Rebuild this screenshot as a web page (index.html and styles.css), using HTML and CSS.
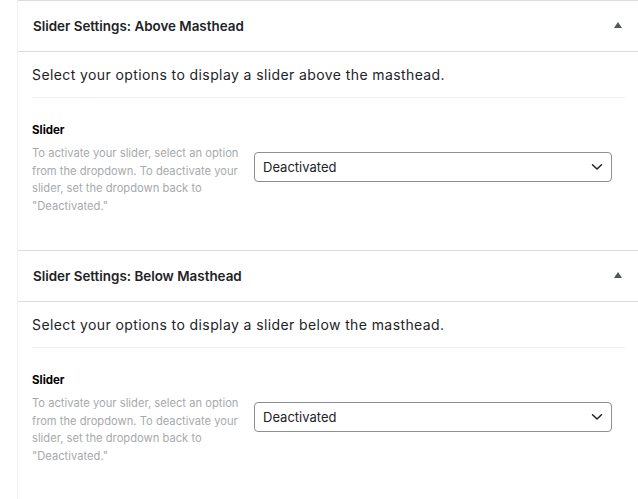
FILE: index.html
```html
<!DOCTYPE html>
<html lang="en">
<head>
<meta charset="utf-8">
<title>Slider Settings</title>
<link rel="stylesheet" href="styles.css">
</head>
<body>
<div class="panel">
  <section class="box">
    <header class="box-head">
      <h3 class="box-title">Slider Settings: Above Masthead</h3>
      <span class="toggle" aria-hidden="true"></span>
    </header>
    <div class="box-body">
      <p class="intro">Select your options to display a slider above the masthead.</p>
      <div class="field">
        <div class="field-info">
          <div class="field-label">Slider</div>
          <p class="field-help">To activate your slider, select an option from the dropdown. To deactivate your slider, set the dropdown back to "Deactivated."</p>
        </div>
        <div class="field-control">
          <div class="select">
            <span class="select-value">Deactivated</span>
            <svg class="chevron" width="12" height="8" viewBox="0 0 12 8"><path d="M1.5 1.8 L6 6 L10.5 1.8" fill="none" stroke="#1d2327" stroke-width="1.5" stroke-linecap="round" stroke-linejoin="round"/></svg>
          </div>
        </div>
      </div>
    </div>
  </section>
  <section class="box">
    <header class="box-head">
      <h3 class="box-title">Slider Settings: Below Masthead</h3>
      <span class="toggle" aria-hidden="true"></span>
    </header>
    <div class="box-body">
      <p class="intro">Select your options to display a slider below the masthead.</p>
      <div class="field">
        <div class="field-info">
          <div class="field-label">Slider</div>
          <p class="field-help">To activate your slider, select an option from the dropdown. To deactivate your slider, set the dropdown back to "Deactivated."</p>
        </div>
        <div class="field-control">
          <div class="select">
            <span class="select-value">Deactivated</span>
            <svg class="chevron" width="12" height="8" viewBox="0 0 12 8"><path d="M1.5 1.8 L6 6 L10.5 1.8" fill="none" stroke="#1d2327" stroke-width="1.5" stroke-linecap="round" stroke-linejoin="round"/></svg>
          </div>
        </div>
      </div>
    </div>
  </section>
</div>
</body>
</html>
```

FILE: styles.css
```css
html, body {
  margin: 0;
  padding: 0;
  background: #ffffff;
}
body {
  font-family: Inter, "Noto Sans", "Liberation Sans", sans-serif;
  color: #1d2327;
}
.panel {
  margin-left: 17px;
  border-left: 1px solid #f0f0f1;
  background: #ffffff;
}
.box {
  border-top: 1px solid #dcdcde;
  height: 249px;
}
.box-head {
  height: 51px;
  box-sizing: border-box;
  border-bottom: 1px solid #dcdcde;
  display: flex;
  align-items: center;
  justify-content: space-between;
  padding: 0 16px 0 15px;
}
.box-title {
  margin: 0;
  font-size: 13.4px;
  font-weight: 600;
  letter-spacing: 0;
  color: #1d2327;
}
.toggle {
  width: 0;
  height: 0;
  border-left: 4.5px solid transparent;
  border-right: 4.5px solid transparent;
  border-bottom: 6px solid #50575e;
  margin-top: -3px;
}
.box-body {
  padding: 0 13px 0 14px;
}
.intro {
  margin: 0;
  padding: 12px 0 11px;
  line-height: 22px;
  font-size: 14px;
  letter-spacing: 0.4px;
  border-bottom: 1px solid #f0f0f1;
}
.field {
  display: flex;
  padding-top: 23px;
}
.field-info {
  width: 208px;
  flex: none;
}
.field-label {
  font-size: 11.5px;
  font-weight: 700;
  color: #000000;
  line-height: 18px;
}
.field-help {
  margin: 6px 0 0;
  font-size: 11.2px;
  line-height: 17.6px;
  color: #a7aaad;
}
.field-control {
  flex: 1;
  padding-left: 14px;
  padding-right: 13px;
  padding-top: 31px;
}
.select {
  height: 28px;
  border: 1px solid #8c8f94;
  border-radius: 4px;
  display: flex;
  align-items: center;
  justify-content: space-between;
  padding: 0 8px 0 8px;
  background: #ffffff;
}
.select-value {
  font-size: 13px;
  color: #1d2327;
}
.chevron {
  display: block;
}
```
